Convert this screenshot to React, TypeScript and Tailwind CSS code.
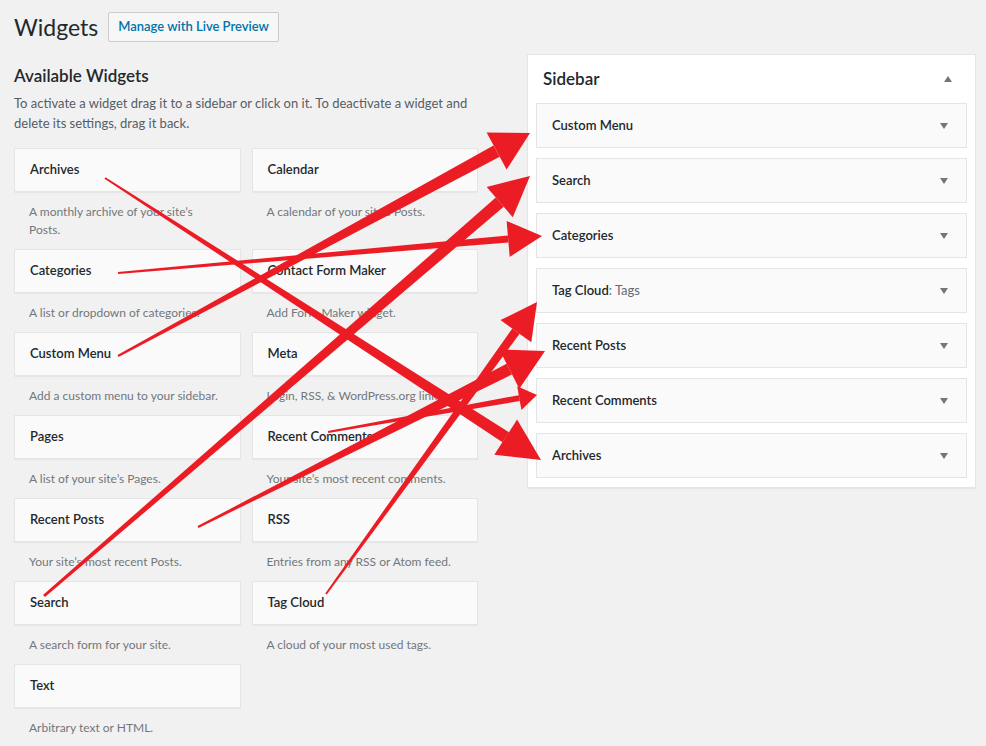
import React from "react"

type Widget = { title: string; desc: string }

const available: [Widget, Widget | null][] = [
  [
    { title: "Archives", desc: "A monthly archive of your site’s Posts." },
    { title: "Calendar", desc: "A calendar of your site’s Posts." },
  ],
  [
    { title: "Categories", desc: "A list or dropdown of categories." },
    { title: "Contact Form Maker", desc: "Add Form Maker widget." },
  ],
  [
    { title: "Custom Menu", desc: "Add a custom menu to your sidebar." },
    { title: "Meta", desc: "Login, RSS, & WordPress.org links." },
  ],
  [
    { title: "Pages", desc: "A list of your site’s Pages." },
    { title: "Recent Comments", desc: "Your site’s most recent comments." },
  ],
  [
    { title: "Recent Posts", desc: "Your site’s most recent Posts." },
    { title: "RSS", desc: "Entries from any RSS or Atom feed." },
  ],
  [
    { title: "Search", desc: "A search form for your site." },
    { title: "Tag Cloud", desc: "A cloud of your most used tags." },
  ],
  [{ title: "Text", desc: "Arbitrary text or HTML." }, null],
]

const sidebarItems: { title: string; extra?: string }[] = [
  { title: "Custom Menu" },
  { title: "Search" },
  { title: "Categories" },
  { title: "Tag Cloud", extra: "Tags" },
  { title: "Recent Posts" },
  { title: "Recent Comments" },
  { title: "Archives" },
]

// start, tip, head length, head half width, shaft width at start / end
const arrows: [number, number, number, number, number, number, number, number][] = [
  [105, 178, 541, 460, 42, 21, 2, 12],
  [118, 273, 542, 236, 34, 18, 2, 7],
  [118, 356, 530, 133, 38, 21, 2, 13],
  [44, 596, 530, 176, 40, 20, 3, 12],
  [198, 527, 545, 351, 40, 22, 2, 12],
  [328, 432, 537, 395, 18, 12, 2, 6],
  [326, 594, 537, 302, 36, 19, 2, 9],
]

const Arrow = ({ a }: { a: (typeof arrows)[number] }) => {
  const [sx, sy, tx, ty, h, w, a0, b0] = a
  const len = Math.hypot(tx - sx, ty - sy)
  const dx = (tx - sx) / len
  const dy = (ty - sy) / len
  const nx = -dy
  const ny = dx
  const bx = tx - h * dx
  const by = ty - h * dy
  const p = (x: number, y: number) => `${x.toFixed(1)},${y.toFixed(1)}`
  const shaft = [
    p(sx + (nx * a0) / 2, sy + (ny * a0) / 2),
    p(bx + (nx * b0) / 2, by + (ny * b0) / 2),
    p(bx - (nx * b0) / 2, by - (ny * b0) / 2),
    p(sx - (nx * a0) / 2, sy - (ny * a0) / 2),
  ].join(" ")
  const head = [p(bx + nx * w, by + ny * w), p(tx, ty), p(bx - nx * w, by - ny * w)].join(" ")
  return (
    <g fill="#ec1c24">
      <polygon points={shaft} />
      <polygon points={head} />
    </g>
  )
}

const Caret = ({ up = false }: { up?: boolean }) => (
  <svg width="10" height="6" viewBox="0 0 10 6" className="shrink-0">
    <polygon points={up ? "1,6 9,6 5,0" : "1,0 9,0 5,6"} fill="#72777c" />
  </svg>
)

const WidgetCell = ({ w }: { w: Widget | null }) => {
  if (!w) return <div />
  return (
    <div>
      <div className="flex h-[44px] items-center border border-[#e5e5e5] bg-[#fafafa] px-[15px] text-[13px] font-semibold text-[#23282d] shadow-[0_1px_1px_rgba(0,0,0,0.04)]">
        {w.title}
      </div>
      <p className="px-[15px] pt-[11px] pb-[10px] text-[12px] leading-[18px] text-[#72777c]">{w.desc}</p>
    </div>
  )
}

const App = () => {
  return (
    <div
      className="relative min-h-[746px] w-[986px] overflow-hidden bg-[#f1f1f1] text-[#23282d]"
      style={{ fontFamily: 'Lato, "Open Sans", sans-serif' }}
    >
      <div className="flex items-center gap-[10px] px-[14px] pt-[12px]">
        <h1 className="text-[23px] leading-[30px] font-normal text-[#23282d]">Widgets</h1>
        <button className="rounded-[2px] border border-[#ccc] bg-[#f7f7f7] px-[9px] py-[4px] text-[13px] font-semibold text-[#0073aa]">
          Manage with Live Preview
        </button>
      </div>

      <div className="flex items-start gap-[49px] pl-[14px]">
        <div className="w-[464px]">
          <h2 className="mt-[22px] text-[17px] leading-[24px] font-semibold">Available Widgets</h2>
          <p className="mt-[5px] text-[13px] leading-[20px] text-[#555d66]">
            To activate a widget drag it to a sidebar or click on it. To deactivate a widget and delete its settings, drag it back.
          </p>
          <div className="mt-[15px] grid grid-cols-2 gap-x-[11px]">
            {available.map(([l, r], i) => (
              <React.Fragment key={i}>
                <WidgetCell w={l} />
                <WidgetCell w={r} />
              </React.Fragment>
            ))}
          </div>
        </div>

        <div className="mt-[12px] w-[449px] border border-[#e5e5e5] bg-white px-[8px] pb-[9px] shadow-[0_1px_1px_rgba(0,0,0,0.04)]">
          <div className="flex h-[48px] items-center justify-between pr-[14px] pl-[7px]">
            <h2 className="text-[17px] font-semibold">Sidebar</h2>
            <Caret up />
          </div>
          <div className="flex flex-col gap-[10px]">
            {sidebarItems.map((s) => (
              <div
                key={s.title}
                className="flex h-[45px] items-center justify-between border border-[#e5e5e5] bg-[#fafafa] pr-[17px] pl-[15px] text-[13px] font-semibold"
              >
                <span>
                  {s.title}
                  {s.extra && <span className="font-normal text-[#606a73]">: {s.extra}</span>}
                </span>
                <Caret />
              </div>
            ))}
          </div>
        </div>
      </div>

      <svg className="pointer-events-none absolute inset-0" width="986" height="746" viewBox="0 0 986 746">
        {arrows.map((a, i) => (
          <Arrow key={i} a={a} />
        ))}
      </svg>
    </div>
  )
}

export default App
